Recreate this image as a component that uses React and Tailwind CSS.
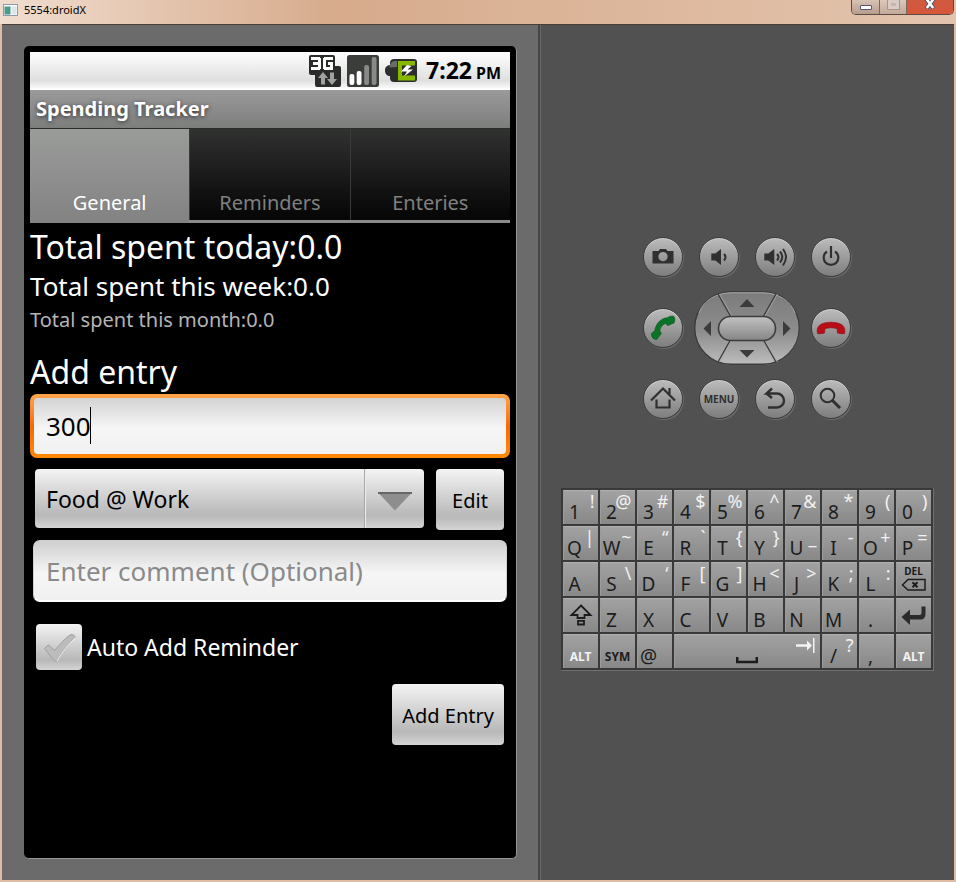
import React from "react";

const DARK = "#303030";

const KEY_ROWS = [
  [["1", "!"], ["2", "@"], ["3", "#"], ["4", "$"], ["5", "%"], ["6", "^"], ["7", "&"], ["8", "*"], ["9", "("], ["0", ")"]],
  [["Q", "|"], ["W", "~"], ["E", "“"], ["R", "`"], ["T", "{"], ["Y", "}"], ["U", "_"], ["I", "-"], ["O", "+"], ["P", "="]],
  [["A", ""], ["S", "\\"], ["D", "‘"], ["F", "["], ["G", "]"], ["H", "<"], ["J", ">"], ["K", ";"], ["L", ":"]],
  [["Z", ""], ["X", ""], ["C", ""], ["V", ""], ["B", ""], ["N", ""], ["M", ""], [".", ""]],
];

function Key({ main, alt, label, wide, children }) {
  return (
    <button
      type="button"
      aria-label={label}
      className={
        "grid h-[34px] overflow-hidden border-l border-t border-l-[#9c9c9c] border-t-[#b0b0b0] bg-linear-to-b from-[#a2a2a2] to-[#888888] " +
        (wide ? "col-span-4" : "")
      }
    >
      {main && (
        <span className="col-start-1 row-start-1 w-[22px] self-end justify-self-start text-center text-[19px] leading-[23px] text-[#1c1c1c]">
          {main}
        </span>
      )}
      {alt && (
        <span className="col-start-1 row-start-1 self-start justify-self-end pr-[3px] text-[18px] leading-[20px] text-[#f2f2f2]">
          {alt}
        </span>
      )}
      {children}
    </button>
  );
}

function Keyboard() {
  return (
    <div className="grid w-full max-w-[373px] grid-cols-10 gap-[2px] border-b border-r border-[#707070] bg-[#393939] p-[2px]">
      {KEY_ROWS[0].map(([m, a]) => <Key key={m} main={m} alt={a} />)}
      {KEY_ROWS[1].map(([m, a]) => <Key key={m} main={m} alt={a} />)}
      {KEY_ROWS[2].map(([m, a]) => <Key key={m} main={m} alt={a} />)}
      <Key>
        <span className="flex flex-col items-center justify-center gap-px">
          <span className="text-[10px] font-bold leading-[11px] text-[#1c1c1c]">DEL</span>
          <svg width="26" height="14" viewBox="0 0 26 14" fill="none" stroke="#1c1c1c" strokeWidth="1.5">
            <path d="M1.5 7 7 1.5h17v10.500H7z" />
            <path d="m11.500 4.200 5 5m0-5-5 5" strokeWidth="2" />
          </svg>
        </span>
      </Key>
      <Key label="Shift">
        <svg className="place-self-center" width="24" height="24" viewBox="0 0 24 24" fill="none" stroke="#1c1c1c" strokeWidth="1.800">
          <path d="M12 2.500 21.500 12H15.500v3h-7v-3H2.500z" />
          <path d="M9 17.800h6v3.700H9z" />
        </svg>
      </Key>
      {KEY_ROWS[3].map(([m, a]) => <Key key={m} main={m} alt={a} />)}
      <Key label="Enter">
        <svg className="place-self-center" width="26" height="22" viewBox="0 0 26 22">
          <path d="M.500 13 9 5.500V11h9.500c1.500 0 2-.8 2-2V2.500h4V10c0 3.500-2 5.500-5 5.500H9V21z" fill="#2b2b2b" />
        </svg>
      </Key>
      <Key>
        <span className="self-end justify-self-center text-[12px] font-bold leading-[22px] text-[#f2f2f2]">ALT</span>
      </Key>
      <Key>
        <span className="self-end justify-self-center text-[12px] font-bold leading-[22px] text-[#1c1c1c]">SYM</span>
      </Key>
      <Key main="@" />
      <Key wide label="Space">
        <svg className="col-start-1 row-start-1 mb-[4px] self-end justify-self-center" width="22" height="7" viewBox="0 0 22 7" fill="none" stroke="#1c1c1c" strokeWidth="2.500">
          <path d="M1.200 0v5h19.600V0" />
        </svg>
        <svg className="col-start-1 row-start-1 mr-[5px] mt-[3px] justify-self-end" width="19" height="15" viewBox="0 0 19 15">
          <path d="M0 6.200h11V2.500L16 7.500l-5 5V8.800H0z" fill="#f2f2f2" />
          <path d="M17 0h1.500v15H17z" fill="#f2f2f2" />
        </svg>
      </Key>
      <Key main="/" alt="?" />
      <Key main="," />
      <Key>
        <span className="self-end justify-self-center text-[12px] font-bold leading-[22px] text-[#f2f2f2]">ALT</span>
      </Key>
    </div>
  );
}

function RoundButton({ label, children }) {
  return (
    <button
      type="button"
      aria-label={label}
      className="flex size-[40px] shrink-0 items-center justify-center rounded-full border border-[#3c3c3c] bg-linear-to-b from-[#bcbcbc] to-[#7e7e7e] shadow-[1px_1px_0_#6b6b6b,inset_0_1px_0_#cfcfcf]"
    >
      {children}
    </button>
  );
}

function Glyph({ children }) {
  return (
    <svg className="size-[40px] shrink-0" viewBox="0 0 40 40" fill="none" stroke={DARK} strokeWidth="2">
      {children}
    </svg>
  );
}

function DPad() {
  return (
    <div className="relative h-[74px] w-[106px] shrink-0">
      <svg className="absolute inset-0" width="106" height="74" viewBox="0 0 106 74">
        <defs>
          <linearGradient id="pad" x1="0" y1="0" x2="0" y2="1">
            <stop offset="0" stopColor="#7c7c7c" />
            <stop offset="0.550" stopColor="#8d8d8d" />
            <stop offset="1" stopColor="#bdbdbd" />
          </linearGradient>
          <linearGradient id="pill" x1="0" y1="0" x2="0" y2="1">
            <stop offset="0" stopColor="#c2c2c2" />
            <stop offset="1" stopColor="#858585" />
          </linearGradient>
        </defs>
        <rect x="1.500" y="1.500" width="104" height="72.500" rx="37" fill="none" stroke="#6d6d6d" />
        <rect x="0.700" y="0.700" width="104.600" height="72.600" rx="36.500" fill="url(#pad)" stroke="#3c3c3c" strokeWidth="1.400" />
        <path d="M37 1.800h32C84 1.800 97 10 101 22M5 22C9 10 22 1.800 37 1.800" fill="none" stroke="#a8a8a8" />
        <path d="m24 3 13 23M82 3 69 26M37 48 24 71M69 48l13 23" stroke="#3c3c3c" strokeWidth="1.400" />
        <path d="m25.500 3 13 23M83.500 3l-13 23M38.500 48l-13 23M70.500 48l13 23" stroke="#a8a8a8" strokeWidth="0.800" />
        <rect x="24.500" y="25.500" width="57" height="24" rx="12" fill="url(#pill)" stroke="#3c3c3c" strokeWidth="1.600" />
        <path d="M53 8 60.500 16h-15zM53 66.500l-7.500-7.500h15zM9.500 37.500 17 30v15zM96.500 37.500 89 30v15z" fill="#3c3c3c" />
      </svg>
      <div className="relative grid h-full grid-cols-[24px_1fr_24px] grid-rows-[24px_1fr_24px]">
        <button type="button" aria-label="Up" className="col-start-2 row-start-1" />
        <button type="button" aria-label="Left" className="col-start-1 row-start-2" />
        <button type="button" aria-label="Select" className="col-start-2 row-start-2" />
        <button type="button" aria-label="Right" className="col-start-3 row-start-2" />
        <button type="button" aria-label="Down" className="col-start-2 row-start-3" />
      </div>
    </div>
  );
}

function HardwareButtons() {
  return (
    <div className="flex w-[208px] flex-col gap-[14px]">
      <div className="flex justify-between">
        <RoundButton label="Camera">
          <Glyph>
            <path fillRule="evenodd" d="M9.500 14h6l1.500-2h6l1.500 2h6v12.500h-21zM20 15a4.600 4.600 0 1 0 .01 0z" fill={DARK} stroke="none" />
          </Glyph>
        </RoundButton>
        <RoundButton label="Volume down">
          <Glyph>
            <path d="M12.300 16.500h4L22 12v16l-5.700-4.500h-4z" fill={DARK} stroke="none" />
            <path d="M25 17q3 3 0 6.500" />
          </Glyph>
        </RoundButton>
        <RoundButton label="Volume up">
          <Glyph>
            <path d="M9.300 16.500h4L19.300 12v16l-6-4.500h-4z" fill={DARK} stroke="none" />
            <path d="M22 17q3 3 0 6.500M25 14.500q4.500 5.500 0 11M28 12q6 8 0 16.500" />
          </Glyph>
        </RoundButton>
        <RoundButton label="Power">
          <Glyph>
            <path d="M16 14.500a7.300 7.300 0 1 0 8 0M20 9v12" strokeWidth="2.200" />
          </Glyph>
        </RoundButton>
      </div>
      <div className="flex items-center justify-between">
        <RoundButton label="Call">
          <Glyph>
            <path d="M8.500 27c-.3-1.500.7-3 3.200-3.800C12.500 16 18 10 24.500 9.800c1-1.300 4-2 6.200-1.500 1.500 2 1.500 4.500.3 6.700l-6 2.500c-1.200-.3-1.800-1-2-2.200-3.500 1.200-6 4-6.300 8.200 1 .3 1.600 1 1.600 2L13.800 31.500c-3 0-5-1.700-5.300-4.500z" fill="#0a7426" stroke="#05521a" strokeWidth="0.600" />
          </Glyph>
        </RoundButton>
        <DPad />
        <RoundButton label="End call">
          <Glyph>
            <path d="M6.500 25.500c-.8-4 0-7 3-9 6-3 15-3 21 0 3 2 3.800 5 3 9-2.500.5-5 0-7-.5l-.5-4.500q-6-1.500-12 0l-.5 4.500c-2 .5-4.500 1-7 .5z" fill="#b80f16" stroke="#8c070c" strokeWidth="0.600" />
          </Glyph>
        </RoundButton>
      </div>
      <div className="flex justify-between">
        <RoundButton label="Home">
          <Glyph>
            <path d="M8 21.500 20 9.500l12 12M26.500 9v6M13.500 20.500v8h13v-8" strokeWidth="2.200" />
          </Glyph>
        </RoundButton>
        <RoundButton>
          <span className="text-[10px] font-bold leading-none text-[#303030]">MENU</span>
        </RoundButton>
        <RoundButton label="Back">
          <Glyph>
            <path d="M17 9.500 11.500 14.500h10.500a6.500 6.500 0 0 1 0 14H13M11.500 14.500 17 19" strokeWidth="2.400" />
          </Glyph>
        </RoundButton>
        <RoundButton label="Search">
          <Glyph>
            <circle cx="16.500" cy="16.500" r="6.800" />
            <path d="m21.500 21.500 7.500 7.500" strokeWidth="3" />
          </Glyph>
        </RoundButton>
      </div>
    </div>
  );
}

function StatusBar() {
  return (
    <div className="flex h-[38px] items-center justify-end gap-[6px] bg-linear-to-b from-white via-[#dedfde] via-75% to-white pr-[9px]">
      <svg width="32" height="32" viewBox="0 0 32 32">
        <path d="M2 0h22a2 2 0 0 1 2 2v9h4a2 2 0 0 1 2 2v17a2 2 0 0 1-2 2H8a2 2 0 0 1-2-2V20H2a2 2 0 0 1-2-2V2a2 2 0 0 1 2-2z" fill="#2a2c2a" />
        <path d="M2 2h9v1h1v11h-1v1H2v-3h7v-2H4V7h5V5H2z" fill="#fff" />
        <path d="M15 2h9v3h-7v7h4v-2h-2V7h5v8h-9v-1h-1V3h1z" fill="#fff" />
        <path d="m14 17 5 6h-3v6.500h-4V23H9zM23 30l5-6h-3v-6.500h-4V24h-3z" fill="#a0a2a0" />
      </svg>
      <svg width="32" height="32" viewBox="0 0 32 32">
        <rect width="32" height="32" rx="2.500" fill="#3b3d3b" />
        <rect x="2.500" y="19" width="4.800" height="11" rx="2" fill="#fff" />
        <rect x="9.700" y="16" width="4.800" height="14" rx="2" fill="#fff" />
        <rect x="17.200" y="10" width="4.800" height="20" rx="2" fill="#888a88" />
        <rect x="24.700" y="2" width="4.800" height="28" rx="2" fill="#888a88" />
      </svg>
      <svg width="32" height="32" viewBox="0 0 32 32">
        <path d="M9 4h20a3 3 0 0 1 3 3v17a3 3 0 0 1-3 3H9c-2.500 0-4-1.500-4-4v-2c-3 0-5-2-5-5.500S2 10.500 5 10V8c0-2.500 1.500-4 4-4z" fill="#2c2e2c" />
        <path d="M4.500 12.500C5 8 7 6 11 6h1v6z" fill="#6b6d6b" />
        <path d="M13 6h17v4.500H13zM13 20.500h17v5H13z" fill="#86b800" />
        <path d="M13 10h4v11h-4z" fill="#86b800" />
        <path d="m22 10-6 6.500h6l-3 5 9-7h-5.500l4-3.500z" fill="#fff" />
      </svg>
      <span className="ml-[3px] flex items-baseline gap-[4px] pt-px font-bold text-black">
        <span className="text-[23px] leading-[30px]">7:22</span>
        <span className="text-[16px] leading-[30px]">PM</span>
      </span>
    </div>
  );
}

function Tab({ children, selected }) {
  return (
    <button
      type="button"
      role="tab"
      aria-selected={selected ? "true" : "false"}
      className={
        "flex flex-1 items-end justify-center text-[20px] leading-[26px] " +
        (selected
          ? "bg-linear-to-b from-[#9a9c9a] to-[#828282] pb-[7px] text-white"
          : "mb-[3px] border-l border-[#3a3a3a] bg-linear-to-b from-[#303230] to-[#060606] pb-[4px] text-[#808080]")
      }
    >
      {children}
    </button>
  );
}

const PLATE = "bg-linear-to-b from-[#f4f4f4] via-[#b8b8b8] via-78% to-[#d4d4d4] rounded-[4px]";

function Phone() {
  return (
    <div className="flex flex-1 flex-col rounded-[5px] border-b border-r border-[#959595] bg-black p-[6px]">
      <StatusBar />
      <h1 className="h-[39px] border-b border-[#2c2c2c] bg-linear-to-b from-[#9a9a9a] to-[#7c7e7c] pl-[6px] text-[20px] font-bold leading-[37px] text-white [text-shadow:0_1px_4px_#303030]">
        Spending Tracker
      </h1>
      <div role="tablist" className="flex h-[94px] bg-linear-to-b from-[#8a8c8a] to-[#8a8a8a]">
        <Tab selected>General</Tab>
        <Tab>Reminders</Tab>
        <Tab>Enteries</Tab>
      </div>
      <main className="flex flex-col text-white">
        <p className="pt-[3px] text-[32px] leading-[42px]">Total spent today:0.0</p>
        <p className="text-[26px] leading-[37px]">Total spent this week:0.0</p>
        <p className="text-[20px] leading-[30px] text-[#b4b4b4]">Total spent this month:0.0</p>
        <h2 className="pt-[17px] text-[32px] leading-[40px]">
          <label htmlFor="amount" className="block">Add entry</label>
        </h2>
        <div className="relative mt-[2px] rounded-[7px] bg-linear-to-b from-[#ffa54a] via-[#f66a00] to-[#ff8a05] p-[4px]">
          <input
            id="amount"
            type="text"
            defaultValue="300"
            className="block h-[56px] w-full rounded-[4px] bg-linear-to-b from-[#d4d4d4] via-[#f6f6f6] via-55% to-[#f0f0f0] px-[12px] text-[26px] text-black outline-none"
          />
          <span className="absolute left-[60px] top-[13px] h-[37px] w-px bg-black" />
        </div>
        <div className="mt-[11px] flex items-start gap-[12px] pl-[5px] pr-[6px]">
          <div className="relative min-w-0 flex-1">
            <select aria-label="Category" className={"block h-[59px] w-full appearance-none pl-[11px] pt-[2px] text-[23px] text-black outline-none " + PLATE}>
              <option>Food @ Work</option>
            </select>
            <span className="pointer-events-none absolute right-0 top-0 flex h-full w-[60px] items-center justify-center border-l border-[#a8a8a8] pt-[5px] shadow-[inset_1px_0_0_#ececec]">
              <svg width="34" height="19" viewBox="0 0 34 19">
                <path d="M0 .5h34L17 18.500z" fill="#8e8e8e" />
                <path d="M0 0h34v2H0z" fill="#666" />
              </svg>
            </span>
          </div>
          <button type="button" className={"h-[61px] w-[68px] pt-[2px] text-[20px] text-black " + PLATE}>Edit</button>
        </div>
        <input
          type="text"
          aria-label="Comment"
          placeholder="Enter comment (Optional)"
          className="mx-[3px] mt-[10px] block h-[62px] rounded-[7px] border border-b-2 border-[#d0d0d0] border-b-white bg-linear-to-b from-[#cfcfcf] via-[#f6f6f6] via-55% to-[#f0f0f0] px-[12px] text-[26px] text-black outline-none placeholder:text-[#8a8a8a]"
        />
        <label className="mt-[22px] flex items-center gap-[5px] self-start pl-[6px] text-[23px] leading-[32px]">
          <span className="relative size-[46px]">
            <input type="checkbox" className={"block size-[46px] appearance-none " + PLATE} />
            <svg className="pointer-events-none absolute left-[7px] top-[9px]" width="33" height="29" viewBox="0 0 33 29">
              <path d="m1.500 15.500 3.500-3.500c1 0 2.500 2 6.500 5.500C17 11.500 23 4 28 1.500c2-.5 4 1 4 3C25 11 19 19 14 27.500c-1 1-2 1-3 0z" fill="#bcbcbc" stroke="#a0a0a0" />
              <path d="M32 5C25 11.500 19 19.500 14 28" fill="none" stroke="#efefef" />
            </svg>
          </span>
          Auto Add Reminder
        </label>
        <button type="button" className={"mr-[6px] mt-[14px] h-[61px] self-end px-[10px] pt-[2px] text-[20px] text-black " + PLATE}>
          Add Entry
        </button>
      </main>
    </div>
  );
}

function TitleBar() {
  return (
    <header className="flex h-[24px] items-start justify-between bg-linear-to-r from-[#f0ddcf] via-[#d7ab8c] via-35% to-[#e3c4ae] pl-[3px]">
      <div className="flex h-[19px] items-center gap-[6px]">
        <svg width="15" height="12" viewBox="0 0 15 12">
          <rect x=".5" y=".5" width="14" height="11" fill="#fff" stroke="#8b9bab" />
          <rect x="1.500" y="2.500" width="6" height="8" fill="#4a9a8a" />
          <rect x="8.500" y="2.500" width="5" height="8" fill="#dfe5e8" />
        </svg>
        <span className="text-[11px] leading-[18px] text-black">5554:droidX</span>
      </div>
      <div className="mr-[2px] flex h-[15px] overflow-hidden rounded-b-[5px] border border-t-0 border-[#5c4a44]">
        <button type="button" aria-label="Minimize" className="flex w-[28px] items-end justify-center border-r border-[#7a665c] bg-linear-to-b from-[#d9c3b5] to-[#b79c8c] pb-[4px]">
          <span className="h-[5px] w-[12px] rounded-[1px] border border-[#53566e] bg-white" />
        </button>
        <button type="button" aria-label="Maximize" className="flex w-[27px] items-start justify-center border-r border-[#7a665c] bg-linear-to-b from-[#dcc8bc] to-[#c3a999]">
          <span className="h-[9px] w-[11px] border-[3px] border-[#d8ccc4] bg-[#c9b5a9] outline outline-[#a89488]" />
        </button>
        <button type="button" aria-label="Close" className="flex w-[46px] items-start justify-center bg-linear-to-b from-[#cf5a40] to-[#d8563a]">
          <svg width="12" height="10" viewBox="0 0 12 10">
            <path d="m2.500-1 7 9.500m0-9.500-7 9.500" stroke="#4f5068" strokeWidth="4.500" />
            <path d="m2.800-.5 6.400 8.500m0-8.500L2.800 8" stroke="#fff" strokeWidth="2.600" />
          </svg>
        </button>
      </div>
    </header>
  );
}

export default function App() {
  return (
    <div className="flex min-h-screen flex-col bg-[#e0bca4] font-['Noto_Sans','Open_Sans',sans-serif]">
      <TitleBar />
      <div className="mx-[2px] mb-[2px] grid flex-1 grid-cols-[67fr_52fr] border-t border-[#4a3c36] bg-[#515151]">
        <section aria-label="Device screen" className="flex bg-[#6b6b6b] pb-[21px] pl-[22px] pr-[21px] pt-[21px]">
          <Phone />
        </section>
        <section aria-label="Device controls" className="flex flex-col items-center justify-center gap-[69px] border-l-2 border-[#454545] pt-[2px] shadow-[inset_1px_0_0_#686868]">
          <HardwareButtons />
          <Keyboard />
        </section>
      </div>
    </div>
  );
}
